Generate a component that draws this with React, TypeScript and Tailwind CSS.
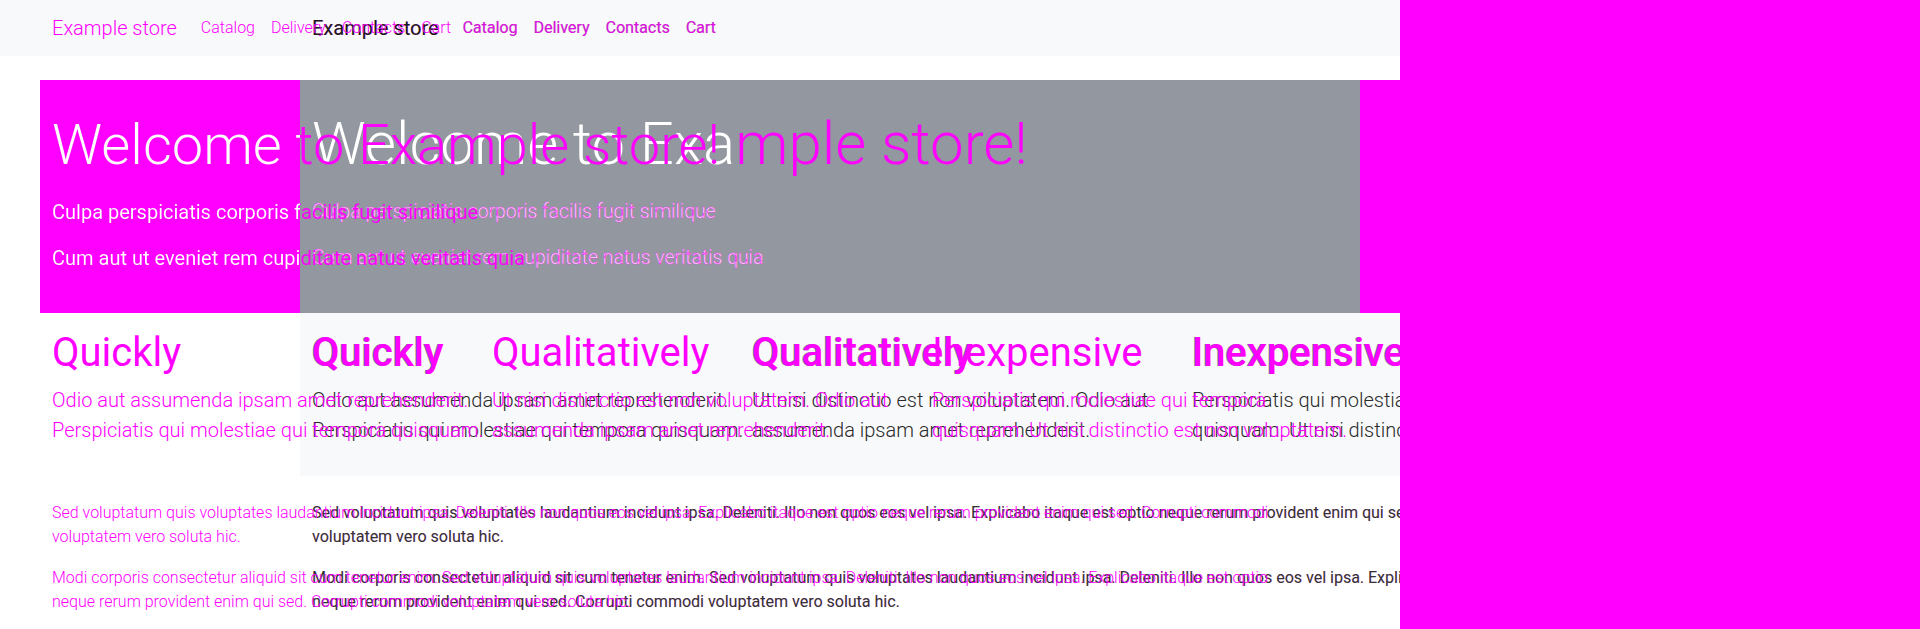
import React from 'react';

const links = ['Catalog', 'Delivery', 'Contacts', 'Cart'];

function Nav() {
  return (
    <div className="grid h-[56px] grid-cols-[1400px] bg-[#f8f9fa]">
      {/* wide layout (B) */}
      <div className="col-start-1 row-start-1 flex items-center pl-[312px]">
        <span className="mr-4 text-[20px] leading-[30px] text-[#1a1a1a] [text-shadow:0.5px_0_0_rgba(255,0,255,0.5)]">
          Example store
        </span>
        {links.map((l) => (
          <span
            key={l}
            className="px-2 text-[16px] leading-6 text-[#e010e0] [text-shadow:-0.5px_0_0_rgba(90,90,90,0.5)]"
          >
            {l}
          </span>
        ))}
      </div>
      {/* narrow layout (A) */}
      <div className="col-start-1 row-start-1 flex items-center pl-[52px] font-light text-[#ff00ff]">
        <span className="mr-4 text-[20px] leading-[30px]">Example store</span>
        {links.map((l) => (
          <span key={l} className="px-2 text-[16px] leading-6">
            {l}
          </span>
        ))}
      </div>
    </div>
  );
}

function Hero() {
  return (
    <div className="mt-6 grid h-[233px] grid-cols-[1400px]">
      <div className="col-start-1 row-start-1 flex">
        <div className="w-[40px] bg-white" />
        <div className="w-[260px] bg-[#ff00ff]" />
        <div className="w-[1060px] bg-[#93979f]" />
        <div className="flex-1 bg-[#ff00ff]" />
      </div>
      {/* B */}
      <div className="col-start-1 row-start-1 pl-[312px] pt-[28px]">
        <h1 className="mb-[17px] w-max whitespace-nowrap bg-[linear-gradient(90deg,#ffffff_420px,#ff00ff_420px)] bg-clip-text text-[60px] font-light leading-[72px] text-transparent">
          Welcome to Example store!
        </h1>
        <p className="mb-4 whitespace-nowrap text-[19.4px] font-light leading-[30px] text-white [-webkit-text-stroke:0.35px_#ff00ff]">
          Culpa perspiciatis corporis facilis fugit similique
        </p>
        <p className="whitespace-nowrap text-[19.4px] font-light leading-[30px] text-white [-webkit-text-stroke:0.35px_#ff00ff]">
          Cum aut ut eveniet rem cupiditate natus veritatis quia
        </p>
      </div>
      {/* A */}
      <div className="col-start-1 row-start-1 pl-[52px] pt-8">
        <h1 className="mb-[18px] w-max whitespace-nowrap bg-[linear-gradient(90deg,#ffffff_248px,#ff00ff_248px)] bg-clip-text text-[56px] font-light leading-[1.2] text-transparent">
          Welcome to Example store!
        </h1>
        <p className="mb-4 w-max whitespace-nowrap bg-[linear-gradient(90deg,#ffffff_248px,#ff00ff_248px)] bg-clip-text text-[20px] leading-[30px] text-transparent">
          Culpa perspiciatis corporis facilis fugit similique
        </p>
        <p className="w-max whitespace-nowrap bg-[linear-gradient(90deg,#ffffff_248px,#ff00ff_248px)] bg-clip-text text-[20px] leading-[30px] text-transparent">
          Cum aut ut eveniet rem cupiditate natus veritatis quia
        </p>
      </div>
    </div>
  );
}

const features = [
  {
    title: 'Quickly',
    l1: 'Odio aut assumenda ipsam amet reprehenderit.',
    l2: 'Perspiciatis qui molestiae qui tempora quisquam.',
  },
  {
    title: 'Qualitatively',
    l1: 'Ut nisi distinctio est non voluptatem. Odio aut',
    l2: 'assumenda ipsam amet reprehenderit.',
  },
  {
    title: 'Inexpensive',
    l1: 'Perspiciatis qui molestiae qui tempora',
    l2: 'quisquam. Ut nisi distinctio est non voluptatem.',
  },
];

function Features() {
  return (
    <div className="grid h-[163px] grid-cols-[1400px] overflow-hidden">
      <div className="col-start-1 row-start-1 flex">
        <div className="w-[300px] bg-white" />
        <div className="flex-1 bg-[#f8f9fa]" />
      </div>
      {/* B */}
      <div className="col-start-1 row-start-1 ml-[300px] grid w-[1320px] grid-cols-3 py-4">
        {features.map((f) => (
          <div key={f.title} className="px-3">
            <h2 className="mb-2 whitespace-nowrap text-[40px] font-medium leading-[48px] text-[#ff00ff] [text-shadow:-1px_0_0_rgba(60,60,60,0.7)]">
              {f.title}
            </h2>
            <p className="whitespace-nowrap text-[20px] font-light leading-[30px] text-[#2a2a2a]">
              {f.l1}
              <br />
              {f.l2}
            </p>
          </div>
        ))}
      </div>
      {/* A */}
      <div className="col-start-1 row-start-1 ml-[40px] grid w-[1320px] grid-cols-3 py-4">
        {features.map((f) => (
          <div key={f.title} className="px-3">
            <h2 className="mb-2 whitespace-nowrap text-[40px] font-normal leading-[48px] text-[#ff00ff]">
              {f.title}
            </h2>
            <p className="whitespace-nowrap text-[20px] font-light leading-[30px] text-[#ff00ff]">
              {f.l1}
              <br />
              {f.l2}
            </p>
          </div>
        ))}
      </div>
    </div>
  );
}

const paras = [
  [
    'Sed voluptatum quis voluptates laudantium incidunt ipsa. Deleniti. Illo non quos eos vel ipsa. Explicabo itaque est optio neque rerum provident enim qui sed. Corrupti commodi',
    'voluptatem vero soluta hic.',
  ],
  [
    'Modi corporis consectetur aliquid sit cum tenetur enim. Sed voluptatum quis voluptates laudantium incidunt ipsa. Deleniti. Illo non quos eos vel ipsa. Explicabo itaque est optio',
    'neque rerum provident enim qui sed. Corrupti commodi voluptatem vero soluta hic.',
  ],
];

function Paragraphs() {
  return (
    <div className="grid grid-cols-[1400px] overflow-hidden pt-[25px]">
      {/* B */}
      <div className="col-start-1 row-start-1 ml-[312px] w-[1296px]">
        {paras.map((p, i) => (
          <p
            key={i}
            className="mb-[17px] whitespace-nowrap text-[16px] leading-6 text-[#333] [text-shadow:0.5px_0_0_rgba(255,0,255,0.3)]"
          >
            {p[0]}
            <br />
            {p[1]}
          </p>
        ))}
      </div>
      {/* A */}
      <div className="col-start-1 row-start-1 ml-[52px] w-[1296px]">
        {paras.map((p, i) => (
          <p key={i} className="mb-[17px] whitespace-nowrap text-[16px] font-light leading-6 text-[#ff00ff]">
            {p[0]}
            <br />
            {p[1]}
          </p>
        ))}
      </div>
    </div>
  );
}

export default function App() {
  return (
    <div className="flex min-h-[629px] w-[1920px] bg-white font-['Roboto',sans-serif]">
      <div className="w-[1400px] shrink-0 overflow-hidden">
        <Nav />
        <Hero />
        <Features />
        <Paragraphs />
      </div>
      <div className="flex-1 bg-[#ff00ff]" />
    </div>
  );
}
